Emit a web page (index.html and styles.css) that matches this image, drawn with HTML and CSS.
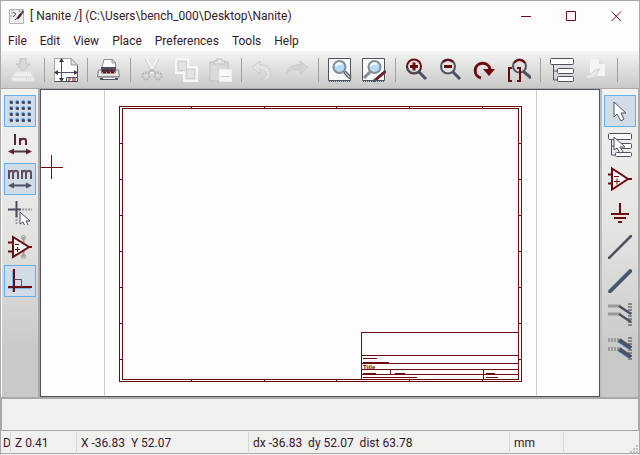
FILE: index.html
```html
<!DOCTYPE html>
<html lang="en">
<head>
<meta charset="utf-8">
<title>Nanite</title>
<link rel="stylesheet" href="styles.css">
</head>
<body>
<div class="window">
  <header class="titlebar">
    <svg class="app-icon" viewBox="0 0 16 16"><path d="M.5 1.500h14v14H.500z" fill="#eee" stroke="#b5b5b5"/><path d="M3 1v5M1 8h6M10 1v3l4-2" fill="none" stroke="#999" stroke-dasharray="2 1"/><path d="M4 4l3 2-3 3M6 12l3-3" fill="none" stroke="#555"/><path d="M14.500 3L8 11" stroke="#4c5264" stroke-width="2"/><path d="M12 6l-3 4" stroke="#6d0a10" stroke-width="2"/></svg>
    <h1 class="title">[ Nanite /] (C:\Users\bench_000\Desktop\Nanite)</h1>
    <button class="win-btn" aria-label="Minimize"><svg viewBox="0 0 11 11"><path d="M0 5.500h10"/></svg></button>
    <button class="win-btn" aria-label="Maximize"><svg viewBox="0 0 11 11"><path d="M.5.500h9v9h-9z"/></svg></button>
    <button class="win-btn" aria-label="Close"><svg viewBox="0 0 11 11"><path d="M.5.500l9.500 9.500M10 .500L.500 10"/></svg></button>
  </header>
  <nav class="menubar">
    <button>File</button><button>Edit</button><button>View</button><button>Place</button><button>Preferences</button><button>Tools</button><button>Help</button>
  </nav>
  <div class="toolbar" role="toolbar" aria-label="Main">
    <button class="tool" aria-label="Save" disabled><svg viewBox="0 0 24 24"><path d="M5 14h14l4 5v4H1v-4z" fill="#eee" stroke="#e4e4e2"/><path d="M1 19h22" stroke="#d2d2d0"/><path d="M9 0h6v6h4l-7 7-7-7h4z" fill="#d9d9d7" stroke="#c2c2c0"/><path d="M15 21h6" stroke="#c4c4c2" stroke-dasharray="1 1"/></svg></button>
    <span class="sep"></span>
    <button class="tool" aria-label="Page settings"><svg viewBox="0 0 24 24"><path d="M.500.500H17l6.500 6.500v16.500H.500z" fill="#fdfdfd" stroke="#a5a5a5"/><path d="M.500 23.500h23V8" fill="none" stroke="#4c5264"/><path d="M17 .500V7h6.500z" fill="#ddd" stroke="#999"/><path d="M7.500 2v20M2 14.500h20" stroke="#4c5264"/><path d="M7.500 0L5 4h5zM7.500 24L5 20h5zM0 14.500l4-2.500v5zM24 14.500L20 12v5z" fill="#4c3240"/><path d="M12.500 19.500h11v4h-11z" fill="#fff" stroke="#4c5264"/><path d="M14 21h3m1 0h4m-8 2h2m2 0h4" stroke="#6d0a10"/></svg></button>
    <span class="sep"></span>
    <button class="tool" aria-label="Print"><svg viewBox="0 0 24 24"><path d="M4.500 11L7 1.500h8.500L18.500 5v6z" fill="#fdfdfd" stroke="#8b8b8b"/><path d="M15 1.500V5h4z" fill="#ddd" stroke="#999"/><path d="M4 9h15v5H4z" fill="#4c5264"/><path d="M1.500 12h3v3h14v-3h3l1 7h-22z" fill="#e6e6e4" stroke="#777c86"/><path d="M5 12.500h13M6 14.500h12" stroke="#6d0a10" stroke-width="1.500" stroke-dasharray="3 1"/><path d="M3 20h18v2H3z" fill="#4c5264"/><path d="M6 20.500h12" stroke="#fff"/><path d="M1 18.500h22" stroke="#909090"/></svg></button>
    <span class="sep"></span>
    <button class="tool" aria-label="Cut" disabled><svg viewBox="0 0 24 24"><path d="M6 1l8 14M18 1l-8 14" stroke="#f5f5f3" stroke-width="3"/><path d="M5 1l7 13M19 1l-7 13" stroke="#c7cacc"/><g fill="none" stroke="#b5b5b2" stroke-width="2" stroke-dasharray="2 1"><circle cx="6" cy="18" r="3.500"/><circle cx="18" cy="18" r="3.500"/></g><path d="M8 15l4-3 4 3" fill="none" stroke="#bdbdba" stroke-width="2"/></svg></button>
    <button class="tool" aria-label="Copy" disabled><svg viewBox="0 0 24 24" fill="#e4e4e2" stroke="#f7f7f5" stroke-width="2"><path d="M2 1h12v14H2z"/><path d="M10 9h13v14H10z"/><path d="M4.500 3.500h8v9h-8zM12.500 11.500h8v9h-8z" stroke="#d0d2d2" stroke-width="1"/></svg></button>
    <button class="tool" aria-label="Paste" disabled><svg viewBox="0 0 24 24"><path d="M2 4h18v19H2z" fill="#dadad8" stroke="#bcbcba"/><path d="M6 6V3h3V1h5v2h3v3z" fill="#e5e5e3" stroke="#bcbcba"/><path d="M11.500 11.500h12v12h-12z" fill="#f7f7f5" stroke="#eee"/><path d="M13 18.500h9" stroke="#c4d0da"/></svg></button>
    <span class="sep"></span>
    <button class="tool" aria-label="Undo" disabled><svg viewBox="0 0 24 24"><path d="M9 3v4c8-1 12 6 10 12-2 4-8 4-9 1 4 1 6-1 5-5-1-2-3-3-6-3v4L1 9.500z" fill="#e2e2e0" stroke="#cbcbc9"/></svg></button>
    <button class="tool" aria-label="Redo" disabled><svg viewBox="0 0 24 24"><path d="M15 3v4C7 6 2 11 2 15c4-4 8-4 13-3v4l8-6.500z" fill="#d4d4d2" stroke="#c9c9c7"/></svg></button>
    <span class="sep"></span>
    <button class="tool" aria-label="Find"><svg viewBox="0 0 24 24"><path d="M.500.500h22v22H.500z" fill="#f8f8f8" stroke="#4c5264"/><path d="M1 23.500h22" stroke="#4c5264" stroke-dasharray="1 1"/><circle cx="11.500" cy="9" r="6" fill="#b4dcf7" stroke="#858b94" stroke-width="2"/><path d="M8 8c1-3 4-3 6-2" fill="none" stroke="#fff" stroke-width="2"/><path d="M16.500 14l6 6" stroke="#4c5264" stroke-width="3.500"/><path d="M17 14.500l5 5" stroke="#c3c7cb" stroke-width="1.500"/></svg></button>
    <button class="tool" aria-label="Find and replace"><svg viewBox="0 0 24 24"><path d="M.500.500h22v22H.500z" fill="#f8f8f8" stroke="#4c5264"/><path d="M1 23.500h22" stroke="#4c5264" stroke-dasharray="1 1"/><circle cx="12.500" cy="9" r="6" fill="#b4dcf7" stroke="#858b94" stroke-width="2"/><path d="M9 8c1-3 4-3 6-2" fill="none" stroke="#fff" stroke-width="2"/><path d="M8 14l-6 6" stroke="#858b94" stroke-width="3"/><path d="M24 13L13 22l-2 2" fill="none" stroke="#4c5264" stroke-width="3"/><path d="M23 13.500l-9 8" stroke="#7c1118" stroke-width="2"/></svg></button>
    <span class="sep"></span>
    <button class="tool" aria-label="Zoom in"><svg viewBox="0 0 24 24" fill="none"><path d="M14 14l7 7" stroke="#4c5264" stroke-width="3"/><circle cx="9" cy="8.500" r="7" fill="#e4e4e2" stroke="#6d0a10" stroke-width="2"/><path d="M2.500 10a7 7 0 0 0 12.500 2" stroke="#4c5264" stroke-width="2"/><path d="M5 8.500h8m-4-4v8" stroke="#6d0a10" stroke-width="3"/></svg></button>
    <button class="tool" aria-label="Zoom out"><svg viewBox="0 0 24 24" fill="none"><path d="M14 14l7 7" stroke="#4c5264" stroke-width="3"/><circle cx="9" cy="8.500" r="7" fill="#e4e4e2" stroke="#4c5264" stroke-width="2"/><path d="M4 4a7 7 0 0 1 10 0" stroke="#6d0a10" stroke-width="2"/><path d="M5 8.500h8" stroke="#6d0a10" stroke-width="3"/></svg></button>
    <button class="tool" aria-label="Redraw"><svg viewBox="0 0 24 24" fill="none"><path d="M8 20a7.500 7.500 0 1 1 9-9" stroke="#6d0a10" stroke-width="3"/><path d="M10 11h12l-6 7z" fill="#6d0a10"/></svg></button>
    <button class="tool" aria-label="Zoom to fit"><svg viewBox="0 0 24 24" fill="none"><path d="M16 13l8 7" stroke="#4c5264" stroke-width="3"/><circle cx="12.500" cy="8" r="6.500" fill="#dedede" stroke="#4c5264" stroke-width="2"/><path d="M7 5a6.500 6.500 0 0 1 11 0" stroke="#6d0a10" stroke-width="2"/><path d="M5 10H2v13h3M10 10h3v13h-3" stroke="#6d0a10" stroke-width="2"/></svg></button>
    <span class="sep"></span>
    <button class="tool" aria-label="Hierarchy"><svg viewBox="0 0 24 24" fill="#fdfdfd" stroke="#4c5264"><path d="M3.500 7v15h4m-4-9h4" fill="none"/><rect x=".5" y=".5" width="23" height="6" rx="1"/><rect x="7.500" y="10.500" width="16" height="5" rx="1"/><rect x="7.500" y="18.500" width="16" height="5" rx="1"/></svg></button>
    <button class="tool" aria-label="Leave sheet" disabled><svg viewBox="0 0 24 24"><path d="M6 1h9l6 5v12H6z" fill="#f4f4f2"/><path d="M15 1v5h6z" fill="#ddd"/><path d="M1 16c4 2 6 0 10-4l5-1c-3 3-2 6-6 9H5l-1 2z" fill="#e8e8e6" stroke="#cfcfcd"/></svg></button>
    <span class="sep"></span>
  </div>
  <main class="workspace">
    <div class="side side-left" role="toolbar" aria-label="Options">
      <button class="tool active" aria-label="Grid"><svg viewBox="0 0 24 24" fill="none" stroke-linecap="round"><path d="M3 3h20M3 9h20M3 15h20M3 21h20" stroke="#5aaaf0" stroke-width="4" stroke-dasharray="0 6"/><path d="M3.500 3.500h20m-20 6h20m-20 6h20m-20 6h20" stroke="#4c3848" stroke-width="3" stroke-dasharray="0 6"/></svg></button>
      <button class="tool" aria-label="Inches"><svg viewBox="0 0 24 24" fill="none"><path d="M7 1v11M12 12V5m0 3c1-3 6-3 6 0v4" stroke="#5e2230" stroke-width="2"/><path d="M4 18.500h16" stroke="#4c3848" stroke-width="2"/><path d="M0 18.500l6-3v6zM24 18.500l-6-3v6z" fill="#5e2230"/></svg></button>
      <button class="tool active" aria-label="Millimetres"><svg viewBox="0 0 24 24" fill="none"><path d="M1 12V3m0 3c1-3 4-3 4 0v6m0-6c1-3 5-3 5 0v6M14 12V3m0 3c1-3 4-3 4 0v6m0-6c1-3 5-3 5 0v6" stroke="#5c4f60" stroke-width="2"/><path d="M4 18.500h16" stroke="#4c5264" stroke-width="2"/><path d="M0 18.500l6-3v6zM24 18.500l-6-3v6z" fill="#4c5264"/></svg></button>
      <button class="tool" aria-label="Cursor shape"><svg viewBox="0 0 24 24" fill="none"><path d="M8 8.500h16M8.500 9v15" stroke="#9a9a9a" stroke-width="2" stroke-dasharray="2 1"/><path d="M8.500 0v16M0 8.500h13" stroke="#4c5264" stroke-width="2"/><path d="M12 11v12l3-2 2 4 3-1-2-4h4z" fill="#fdfdfd" stroke="#4c5264"/></svg></button>
      <button class="tool" aria-label="Hidden pins"><svg viewBox="0 0 24 24" fill="none"><path d="M15.500 2v20" stroke="#9a9a9a" stroke-width="2"/><circle cx="15.500" cy="2.500" r="2" stroke="#9a9a9a"/><circle cx="15.500" cy="21.500" r="2" stroke="#9a9a9a"/><path d="M0 7.500h5M0 16.500h5M20 12h4" stroke="#6d0a10" stroke-width="2"/><path d="M5 2l16 10L5 22z" fill="#fdfdfd" stroke="#6d0a10" stroke-width="2"/><path d="M7 9.500h4M7 14.500h5m-2.500-2.500v5" stroke="#6d0a10"/></svg></button>
      <button class="tool active" aria-label="Right angle wires"><svg viewBox="0 0 24 24" fill="none"><path d="M5 1v22M0 19h23" stroke="#7ab6e8" stroke-width="2"/><path d="M6 0v23M0 18h24" stroke="#6d0a10" stroke-width="2"/><path d="M6 10.500h7.500V18" stroke="#4c5264"/></svg></button>
    </div>
    <svg class="canvas" viewBox="0 0 558 305" preserveAspectRatio="xMidYMid meet" role="img" aria-label="Schematic sheet">
      <path class="page-edge" d="M63.500 0v305M495.500 0v305"/>
      <g class="ink">
        <path d="M78.500 15.500h402v275h-402zM81.500 17.500h396v271h-396z"/>
        <path d="M150.500 15v3m73-3v3m72-3v3m73-3v3m73-3v3M150.500 288v3m73-3v3m72-3v3m73-3v3m73-3v3"/>
        <path d="M78 52.500h3m-3 36h3m-3 36h3m-3 36h3m-3 36h3m-3 36h3m-3 36h3M478 52.500h3m-3 36h3m-3 36h3m-3 36h3m-3 36h3m-3 36h3m-3 36h3"/>
        <path d="M320.500 288.500v-47h157M321 264.500h157M321 272.500h157M321 278.500h157M321 283.500h157M349.500 279v5M442.500 279v9"/>
        <path d="M322 267.500h14M322 271.500h26M322 282.500h13M354 282.500h10M445 282.500h9M322 286.500h54M445 286.500h12"/>
        <path d="M-1 76.500h23M10.500 64v24"/>
      </g>
      <text class="sheet-title" x="322" y="278">Title</text>
    </svg>
    <div class="side side-right" role="toolbar" aria-label="Tools">
      <button class="tool active" aria-label="Select"><svg viewBox="0 0 24 24"><path d="M6 3v15l3-3 4 7 3-2-3-6h5z" fill="#fdfdfd" stroke="#4c5264"/></svg></button>
      <button class="tool" aria-label="Navigate hierarchy"><svg viewBox="0 0 24 24" fill="#fdfdfd" stroke="#4c5264"><path d="M3.500 7v15h4m-4-9h4" fill="none"/><rect x=".5" y=".5" width="23" height="6" rx="1"/><rect x="7.500" y="10.500" width="16" height="5" rx="1"/><rect x="7.500" y="19.500" width="16" height="4" rx="1"/><path d="M6 4v13l3-2 3 5 3-1-3-5h5z"/></svg></button>
      <button class="tool" aria-label="Place component"><svg viewBox="0 0 24 24" fill="none" stroke="#6d0a10"><path d="M0 7.500h4M0 16.500h4M20 12h4" stroke-width="2"/><path d="M4 1.500L20 12 4 22.500z" fill="#fdfdfd" stroke-width="2"/><path d="M6 9.500h5M6 14.500h6m-3-3v6"/></svg></button>
      <button class="tool" aria-label="Place power port"><svg viewBox="0 0 24 24" stroke="#6d0a10" stroke-width="2"><path d="M12 2v11M3 13h18M6 17h12M10 21h4"/></svg></button>
      <button class="tool" aria-label="Place wire"><svg viewBox="0 0 24 24" stroke-linecap="round"><path d="M1 23L23 1" stroke="#4c5264" stroke-width="2.500"/></svg></button>
      <button class="tool" aria-label="Place bus"><svg viewBox="0 0 24 24" stroke-linecap="round"><path d="M2 22L22 2" stroke="#72b2ea" stroke-width="4"/><path d="M2 22.500L22.500 2" stroke="#4c5264" stroke-width="3.500"/></svg></button>
      <button class="tool" aria-label="Wire to bus entry"><svg viewBox="0 0 24 24" fill="none"><path d="M22 0v24" stroke="#83868c" stroke-width="4" stroke-dasharray="2 1"/><path d="M0 3h12M0 11h12" stroke="#9a9a9a" stroke-width="3"/><path d="M11 3l12 8M11 11l12 8" stroke="#4c5264" stroke-width="2.500"/></svg></button>
      <button class="tool" aria-label="Bus to bus entry"><svg viewBox="0 0 24 24" fill="none"><path d="M22 0v24" stroke="#83868c" stroke-width="4" stroke-dasharray="2 1"/><path d="M0 3h12M0 12h12" stroke="#9a9a9a" stroke-width="4" stroke-dasharray="2 1"/><path d="M10 4l12 8M10 13l12 8" stroke="#72b2ea" stroke-width="3"/><path d="M11 3l12 8M11 12l12 8" stroke="#4c5264" stroke-width="4"/></svg></button>
    </div>
  </main>
  <section class="messages" aria-label="Messages"></section>
  <footer class="statusbar">
    <span class="clip">D</span><span>Z 0.41</span><span>X -36.83&nbsp; Y 52.07</span><span>dx -36.83&nbsp; dy 52.07&nbsp; dist 63.78</span><span>mm</span>
    <svg class="grip" viewBox="0 0 9 9"><path d="M6 0h2v2H6zM3 3h2v2H3zM6 3h2v2H6zM0 6h2v2H0zM3 6h2v2H3zM6 6h2v2H6z" fill="#bdbdbb"/></svg>
  </footer>
</div>
</body>
</html>
```
FILE: styles.css
```css
* { box-sizing: border-box; }

body {
  margin: 0;
  background: #fdfdfd;
  color: #35182c;
  font: 12px/16px Roboto, "Open Sans", sans-serif;
}

button {
  margin: 0;
  padding: 0;
  border: 0;
  background: none;
  color: inherit;
  font: inherit;
}

svg { display: block; }

.window {
  display: flex;
  flex-direction: column;
  height: 100vh;
  border: 1px solid #a9a9a9;
  border-bottom-color: #f0f0ee;
}

.titlebar {
  display: flex;
  align-items: center;
  flex: none;
  height: 30px;
  padding-left: 8px;
}

.app-icon { width: 16px; height: 16px; }

.title {
  flex: 1;
  margin: 0 0 0 5px;
  font-size: 12px;
  font-weight: 400;
  white-space: nowrap;
}

.win-btn {
  display: grid;
  place-items: center;
  width: 45px;
  height: 30px;
}

.win-btn svg {
  width: 11px;
  height: 11px;
  fill: none;
  stroke: #6d0a10;
}

.menubar {
  display: flex;
  flex: none;
  height: 20px;
  gap: 13px;
  padding-left: 7px;
}

.toolbar {
  display: flex;
  align-items: center;
  flex: none;
  height: 38px;
  padding-left: 5px;
  border-bottom: 1px solid #a9a9a9;
  background: linear-gradient(#f7f7f5, #e6e6e4 30%, #c9c9c7);
}

.tool {
  display: grid;
  place-items: center;
  flex: none;
  width: 34px;
  height: 32px;
}

.tool svg { width: 24px; height: 24px; }

.sep {
  flex: none;
  width: 1px;
  height: 24px;
  margin: 0 4px;
  background: #9f9f9d;
}

.workspace {
  display: flex;
  flex: 1;
  min-height: 0;
}

.side {
  display: flex;
  flex-direction: column;
  align-items: center;
  flex: none;
  gap: 2px;
  padding-top: 6px;
  background: linear-gradient(#f2f2f0, #e4e4e2 45%, #c9c9c7 85%);
}

.side .tool { width: 32px; }

.side-left {
  width: 39px;
  padding-right: 1px;
  border-left: 1px solid #fdfdfd;
  border-right: 2px solid #a9a9a9;
}

.side-right {
  width: 39px;
  border-left: 2px solid #bdbdbb;
  border-right: 1px solid #a9a9a9;
}

.tool.active {
  border: 1px solid #62b0f2;
  background: #d2dce6;
}

.canvas {
  flex: 1;
  min-width: 0;
  height: 100%;
  border: 1px solid #4c5264;
  background: #fdfdfd;
}

.page-edge { stroke: #c9c9c9; }

.ink {
  fill: none;
  stroke: #6d0a10;
  shape-rendering: crispEdges;
}

.sheet-title {
  fill: #6d0a10;
  font: bold 6px "Liberation Sans", sans-serif;
}

.messages {
  flex: none;
  height: 34px;
  border: 1px solid #a9a9a9;
  border-width: 2px 1px 1px;
  background: #f0f0ee;
}

.statusbar {
  display: grid;
  grid-template-columns: 10px 66px 172px 261px 54px 1fr;
  flex: none;
  height: 23px;
  padding-top: 1px;
  border-bottom: 1px solid #a9a9a9;
  background: #f0f0ee;
  line-height: 22px;
}

.statusbar span {
  padding-left: 4px;
  border-right: 1px solid #d2dae0;
  white-space: nowrap;
}

.statusbar .clip {
  padding-left: 2px;
  overflow: hidden;
}

.grip {
  align-self: end;
  justify-self: end;
  width: 9px;
  height: 9px;
}
```
